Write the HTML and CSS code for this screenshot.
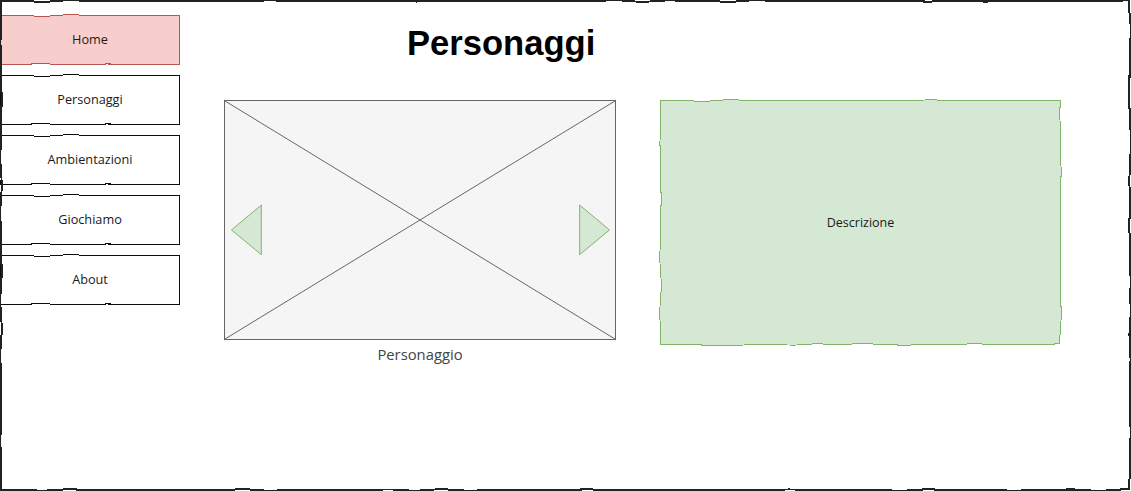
FILE: index.html
```html
<!DOCTYPE html>
<html lang="it">
<head>
    <meta charset="UTF-8">
    <meta name="viewport" content="width=device-width, initial-scale=1.0">
    <title>Personaggi</title>
    <link rel="stylesheet" href="styles.css">
</head>
<body>
    <!-- filtro per i bordi "a mano" -->
    <svg class="defs" width="0" height="0">
        <filter id="rough">
            <feTurbulence type="fractalNoise" baseFrequency="0.035" numOctaves="1" seed="5" result="noise"/>
            <feDisplacementMap in="SourceGraphic" in2="noise" scale="3.5"/>
        </filter>
    </svg>

    <div class="page">
        <nav class="sidebar">
            <div class="nav-btn active">Home</div>
            <div class="nav-btn">Personaggi</div>
            <div class="nav-btn">Ambientazioni</div>
            <div class="nav-btn">Giochiamo</div>
            <div class="nav-btn">About</div>
        </nav>

        <main class="main">
            <h1 class="title">Personaggi</h1>

            <div class="row">
                <div class="gallery">
                    <div class="picture">
                        <svg viewBox="0 0 392 240" preserveAspectRatio="none">
                            <line x1="0" y1="0" x2="392" y2="240" stroke="#666" stroke-width="1"/>
                            <line x1="0" y1="240" x2="392" y2="0" stroke="#666" stroke-width="1"/>
                            <polygon points="6.5,130 36.5,105 36.5,155" fill="#d5e8d4" stroke="#82b366"/>
                            <polygon points="356.5,105 386.5,130 356.5,155" fill="#d5e8d4" stroke="#82b366"/>
                        </svg>
                    </div>
                    <div class="caption">Personaggio</div>
                </div>

                <div class="description">Descrizione</div>
            </div>
        </main>
    </div>
</body>
</html>
```

FILE: styles.css
```css
body {
    margin: 0;
    font-family: "Open Sans", "Noto Sans", sans-serif;
    color: #1a1a1a;
    background-color: #fff;
}
.defs {
    position: absolute;
}
.page {
    position: relative;
    display: flex;
    width: 1131px;
    height: 491px;
    box-sizing: border-box;
}
.page::before {
    content: "";
    position: absolute;
    inset: 0 0 0 0;
    border: 2px solid #222;
    filter: url(#rough);
    pointer-events: none;
}
.sidebar {
    display: flex;
    flex-direction: column;
    gap: 10px;
    width: 180px;
    padding-top: 15px;
}
.nav-btn {
    position: relative;
    height: 50px;
    line-height: 48px;
    text-align: center;
    font-size: 12.7px;
}
.nav-btn::before {
    content: "";
    position: absolute;
    inset: 0;
    border: 1px solid #111;
    background-color: #fff;
    filter: url(#rough);
    z-index: -1;
}
.nav-btn.active::before {
    background-color: #f8cecc;
    border-color: #b85450;
}
.main {
    flex: 1;
    padding-left: 44px;
}
.title {
    margin: 23px 0 37px 183px;
    font-family: "Liberation Sans", Arial, sans-serif;
    font-size: 34.6px;
    line-height: 40px;
    font-weight: bold;
    color: #000;
}
.row {
    display: flex;
    gap: 44px;
    align-items: flex-start;
}
.gallery {
    width: 392px;
}
.picture {
    height: 240px;
    background-color: #f5f5f5;
    border: 1px solid #666;
    box-sizing: border-box;
}
.picture svg {
    display: block;
    width: 100%;
    height: 100%;
}
.caption {
    margin-top: 5px;
    text-align: center;
    font-size: 14.8px;
    line-height: 18px;
    color: #444;
}
.description {
    position: relative;
    width: 401px;
    height: 245px;
    display: flex;
    align-items: center;
    justify-content: center;
    font-size: 12.5px;
    padding-bottom: 1px;
    box-sizing: border-box;
}
.description::before {
    content: "";
    position: absolute;
    inset: 0;
    background-color: #d5e8d4;
    border: 1px solid #82b366;
    filter: url(#rough);
    z-index: -1;
}
```
